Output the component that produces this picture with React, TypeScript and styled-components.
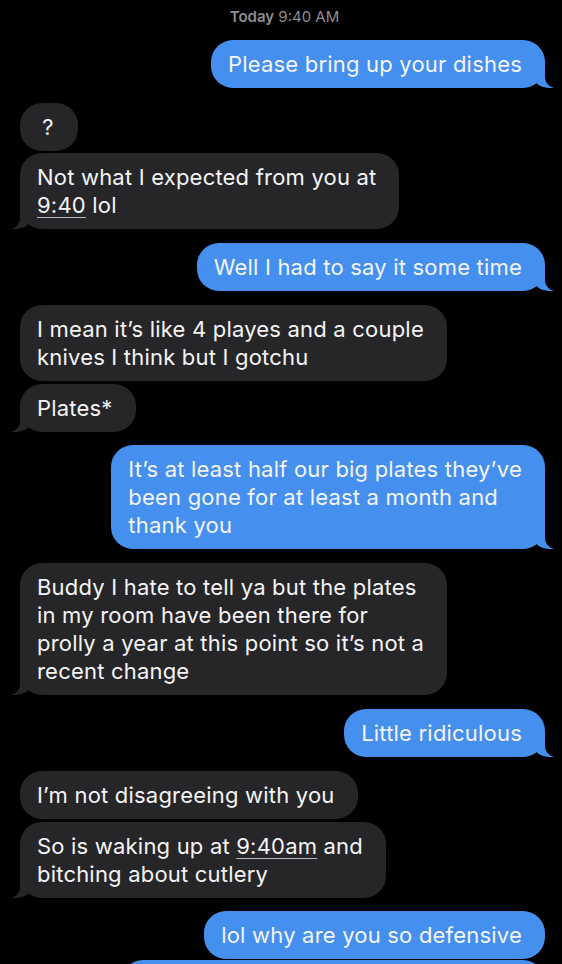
import React from "react";
import styled, { createGlobalStyle, css } from "styled-components";

const GlobalStyle = createGlobalStyle`
  html, body {
    margin: 0;
    padding: 0;
    background: #000;
    overflow: hidden;
  }
  body {
    font-family: Inter, "Noto Sans", "Liberation Sans", sans-serif;
    -webkit-font-smoothing: antialiased;
  }
`;

const BLUE = "#4590ef";
const GRAY = "#262628";

type Side = "sent" | "recv";

const Thread = styled.div`
  display: flex;
  flex-direction: column;
  padding: 7px 17px 0 20px;
  background: #000;
  min-height: 964px;
  box-sizing: border-box;
`;

const Stamp = styled.div`
  align-self: center;
  color: #8d8d92;
  font-size: 15px;
  line-height: 20px;
  margin-left: 4px;
  b {
    font-weight: 600;
  }
`;

const Row = styled.div<{ $side: Side; $gap: number }>`
  display: flex;
  justify-content: ${(p) => (p.$side === "sent" ? "flex-end" : "flex-start")};
  margin-top: ${(p) => p.$gap}px;
`;

const tailSent = css`
  &::before {
    content: "";
    position: absolute;
    bottom: 0;
    right: -9px;
    width: 22px;
    height: 24px;
    background: ${BLUE};
    border-bottom-left-radius: 17px 15px;
  }
  &::after {
    content: "";
    position: absolute;
    bottom: 0;
    right: -28px;
    width: 28px;
    height: 24px;
    background: #000;
    border-bottom-left-radius: 11px;
  }
`;

const tailRecv = css`
  &::before {
    content: "";
    position: absolute;
    bottom: 0;
    left: -9px;
    width: 22px;
    height: 24px;
    background: ${GRAY};
    border-bottom-right-radius: 17px 15px;
  }
  &::after {
    content: "";
    position: absolute;
    bottom: 0;
    left: -28px;
    width: 28px;
    height: 24px;
    background: #000;
    border-bottom-right-radius: 11px;
  }
`;

const Bubble = styled.div<{ $side: Side; $tail: boolean }>`
  position: relative;
  z-index: 0;
  box-sizing: border-box;
  min-width: 58px;
  padding: 10px 23px 10px 17px;
  border-radius: 22px;
  background: ${(p) => (p.$side === "sent" ? BLUE : GRAY)};
  color: #f4f4f6;
  font-size: 22px;
  letter-spacing: 0.2px;
  line-height: 28px;
  white-space: nowrap;
  ${(p) => p.$tail && (p.$side === "sent" ? tailSent : tailRecv)}
  &::before, &::after {
    z-index: -1;
  }
`;

const Line = styled.span`
  display: block;
  position: relative;
  z-index: 1;
`;

const Centered = styled(Line)`
  text-align: center;
  padding-left: 4px;
`;

const Link = styled.span`
  text-decoration: underline;
  text-decoration-thickness: 1px;
  text-underline-offset: 4px;
  text-decoration-color: rgba(235, 235, 240, 0.75);
`;

const Peek = styled.div`
  width: 424px;
  height: 48px;
  border-radius: 22px;
  background: ${BLUE};
`;

type Msg = {
  side: Side;
  tail: boolean;
  gap: number;
  lines: React.ReactNode[];
  center?: boolean;
};

const messages: Msg[] = [
  { side: "sent", tail: true, gap: 13, lines: ["Please bring up your dishes"] },
  { side: "recv", tail: false, gap: 15, lines: ["?"], center: true },
  {
    side: "recv",
    tail: true,
    gap: 2,
    lines: [
      "Not what I expected from you at",
      <>
        <Link>9:40</Link> lol
      </>,
    ],
  },
  { side: "sent", tail: true, gap: 14, lines: ["Well I had to say it some time"] },
  {
    side: "recv",
    tail: false,
    gap: 14,
    lines: ["I mean it\u2019s like 4 playes and a couple", "knives I think but I gotchu"],
  },
  { side: "recv", tail: true, gap: 3, lines: ["Plates*"] },
  {
    side: "sent",
    tail: true,
    gap: 13,
    lines: [
      "It\u2019s at least half our big plates they\u2019ve",
      "been gone for at least a month and",
      "thank you",
    ],
  },
  {
    side: "recv",
    tail: true,
    gap: 14,
    lines: [
      "Buddy I hate to tell ya but the plates",
      "in my room have been there for",
      "prolly a year at this point so it\u2019s not a",
      "recent change",
    ],
  },
  { side: "sent", tail: true, gap: 14, lines: ["Little ridiculous"] },
  { side: "recv", tail: false, gap: 14, lines: ["I\u2019m not disagreeing with you"] },
  {
    side: "recv",
    tail: true,
    gap: 3,
    lines: [
      <>
        So is waking up at <Link>9:40am</Link> and
      </>,
      "bitching about cutlery",
    ],
  },
  { side: "sent", tail: false, gap: 13, lines: ["lol why are you so defensive"] },
];

export default function App() {
  return (
    <>
      <GlobalStyle />
      <Thread>
        <Stamp>
          <b>Today</b> 9:40 AM
        </Stamp>
        {messages.map((m, i) => (
          <Row key={i} $side={m.side} $gap={m.gap}>
            <Bubble $side={m.side} $tail={m.tail}>
              {m.lines.map((l, j) =>
                m.center ? <Centered key={j}>{l}</Centered> : <Line key={j}>{l}</Line>
              )}
            </Bubble>
          </Row>
        ))}
        <Row $side="sent" $gap={1}>
          <Peek />
        </Row>
      </Thread>
    </>
  );
}
